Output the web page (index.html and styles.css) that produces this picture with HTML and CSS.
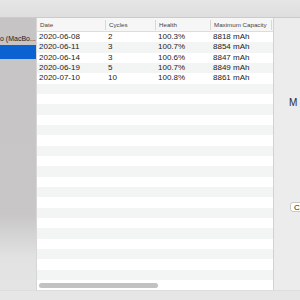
FILE: index.html
```html
<!DOCTYPE html>
<html lang="en">
<head>
    <meta charset="UTF-8">
    <meta name="viewport" content="width=device-width, initial-scale=1.0">
    <title>Battery History</title>
    <link rel="stylesheet" href="styles.css">
</head>
<body>
    <div class="toolbar"></div>

    <div class="main">
        <div class="sidebar">
            <div class="device">o (MacBo...</div>
            <div class="device selected"></div>
        </div>

        <div class="table-area">
            <div class="table">
                <div class="row header">
                    <div class="cell">Date</div>
                    <div class="cell">Cycles</div>
                    <div class="cell">Health</div>
                    <div class="cell">Maximum Capacity</div>
                    <div class="cell"></div>
                </div>
                <div class="row"><div class="cell">2020-06-08</div><div class="cell">2</div><div class="cell">100.3%</div><div class="cell">8818 mAh</div><div class="cell"></div></div>
                <div class="row"><div class="cell">2020-06-11</div><div class="cell">3</div><div class="cell">100.7%</div><div class="cell">8854 mAh</div><div class="cell"></div></div>
                <div class="row"><div class="cell">2020-06-14</div><div class="cell">3</div><div class="cell">100.6%</div><div class="cell">8847 mAh</div><div class="cell"></div></div>
                <div class="row"><div class="cell">2020-06-19</div><div class="cell">5</div><div class="cell">100.7%</div><div class="cell">8849 mAh</div><div class="cell"></div></div>
                <div class="row"><div class="cell">2020-07-10</div><div class="cell">10</div><div class="cell">100.8%</div><div class="cell">8861 mAh</div><div class="cell"></div></div>
                <div class="row"></div>
                <div class="row"></div>
                <div class="row"></div>
                <div class="row"></div>
                <div class="row"></div>
                <div class="row"></div>
                <div class="row"></div>
                <div class="row"></div>
                <div class="row"></div>
                <div class="row"></div>
                <div class="row"></div>
                <div class="row"></div>
                <div class="row"></div>
                <div class="row"></div>
                <div class="row"></div>
                <div class="row"></div>
                <div class="row"></div>
                <div class="row"></div>
                <div class="row"></div>
            </div>
            <div class="scroller">
                <div class="thumb"></div>
            </div>
        </div>

        <div class="inspector">
            <div class="title">M</div>
            <div class="button">C</div>
        </div>
    </div>

    <div class="statusbar"></div>
</body>
</html>
```

FILE: styles.css
```css
* {
    margin: 0;
    padding: 0;
    box-sizing: border-box;
}

body {
    width: 300px;
    height: 300px;
    overflow: hidden;
    background-color: #e6e6e6;
    font-family: "Liberation Sans", Arial, sans-serif;
    color: #222222;
}

.toolbar {
    height: 18px;
    background: linear-gradient(#e6e6e6, #dedede);
    border-bottom: 1px solid #cbcbcb;
}

.main {
    display: flex;
    height: 272px;
}

.sidebar {
    width: 37px;
    padding-top: 14px;
    background: linear-gradient(#c6c4c4 0%, #c8c6c6 72%, #e2e2e2 88%, #e4e4e4 100%);
    border-right: 1px solid #d6d6d6;
    overflow: hidden;
}

.device {
    height: 13px;
    line-height: 13px;
    font-size: 7px;
    color: #222222;
    white-space: nowrap;
}

.device.selected {
    height: 14px;
    background-color: #0b62d0;
}

.table-area {
    width: 236px;
    display: flex;
    flex-direction: column;
    background-color: #ffffff;
}

.table {
    flex: 1;
    overflow: hidden;
}

.row {
    display: grid;
    grid-template-columns: 69px 50px 55px 61px 1px;
    height: 10.33px;
    font-size: 8px;
    line-height: 10.33px;
}

.row:nth-child(odd) {
    background-color: #f3f4f4;
}

.row.header {
    height: 14px;
    line-height: 14px;
    font-size: 6.2px;
    color: #444444;
    background-color: #f6f6f6;
    border-bottom: 1px solid #dcdcdc;
}

.row .cell {
    padding-left: 2px;
    white-space: nowrap;
    overflow: hidden;
}

.row.header .cell {
    padding-left: 3px;
    border-right: 1px solid #d8d8d8;
    height: 10px;
    line-height: 10px;
    margin-top: 2px;
}

.row.header .cell:last-child {
    border-right: none;
}

.scroller {
    height: 10px;
    padding: 3px 0 2px 2px;
}

.thumb {
    width: 119px;
    height: 5px;
    border-radius: 3px;
    background-color: #c2c2c2;
}

.inspector {
    flex: 1;
    background-color: #ececec;
    border-left: 1px solid #d2d2d2;
    padding-top: 79px;
    padding-left: 15px;
    overflow: hidden;
}

.title {
    font-size: 10px;
    color: #2a2a2a;
    height: 11px;
    line-height: 11px;
}

.button {
    margin-top: 94px;
    margin-left: 1px;
    width: 30px;
    height: 10px;
    line-height: 9px;
    padding-left: 3px;
    font-size: 8px;
    background-color: #ffffff;
    border: 1px solid #c8c8c8;
    border-radius: 3px;
}

.statusbar {
    height: 10px;
    background-color: #e6e6e6;
    border-top: 1px solid #dddddd;
}
```
